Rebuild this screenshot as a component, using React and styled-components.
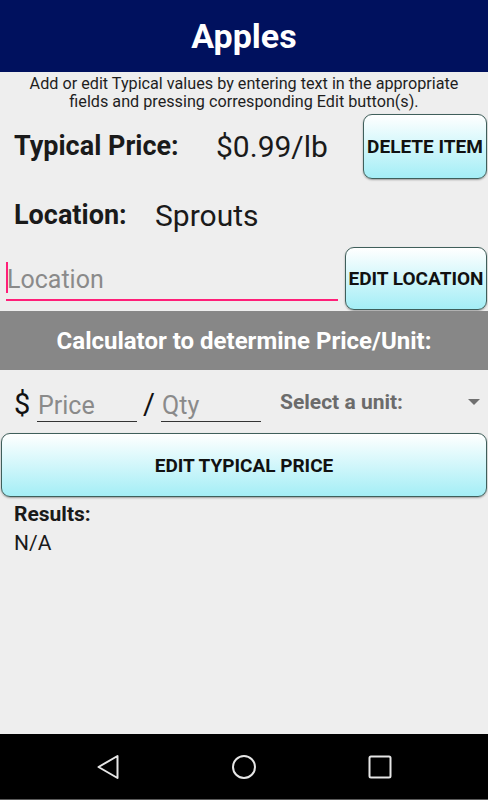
import styled, { createGlobalStyle } from "styled-components";

const GlobalStyle = createGlobalStyle`
  html, body {
    margin: 0;
    padding: 0;
    background: #eeeeee;
    font-family: Roboto, "Liberation Sans", sans-serif;
    color: #1a1a1a;
  }
  * { box-sizing: border-box; }
`;

const Screen = styled.div`
  width: 488px;
  height: 800px;
  display: flex;
  flex-direction: column;
  background: #eeeeee;
`;

const Header = styled.header`
  height: 72px;
  background: #00115e;
  display: flex;
  align-items: center;
  justify-content: center;
`;

const Title = styled.h1`
  margin: 0;
  color: #fff;
  font-size: 34px;
  font-weight: 700;
`;

const Intro = styled.p`
  margin: 3px 0 0;
  padding: 0 24px;
  text-align: center;
  font-size: 16.2px;
  line-height: 18px;
  color: #1e1e1e;
`;

const InfoRow = styled.div`
  display: flex;
  align-items: center;
  height: ${(p) => p.$height}px;
  padding: ${(p) => p.$top || 0}px 0 0 14px;
`;

const Label = styled.span`
  font-weight: 700;
  font-size: 27px;
  width: ${(p) => p.$width}px;
  color: #1a1a1a;
`;

const Value = styled.span`
  font-size: 30px;
  color: #1a1a1a;
  flex: 1;
`;

const Button = styled.button`
  font-family: inherit;
  font-weight: 700;
  font-size: 19px;
  color: #111;
  border: 1px solid #3f5f5b;
  border-radius: 9px;
  background: linear-gradient(to bottom, #ffffff 0%, #a4eef6 100%);
  box-shadow: 0 1px 2px rgba(0, 0, 0, 0.35);
  padding: 0;
  width: ${(p) => p.$width || "auto"};
  height: ${(p) => p.$height}px;
  white-space: nowrap;
`;

const EditRow = styled.div`
  display: flex;
  align-items: flex-start;
  padding: 0 1px 0 6px;
  margin-top: 4px;
  gap: 7px;
`;

const LocationField = styled.div`
  position: relative;
  flex: 1;
  height: 54px;
  border-bottom: 2px solid #ff1f78;
  display: flex;
  align-items: flex-end;
  padding-bottom: 5px;
`;

const Caret = styled.span`
  position: absolute;
  left: 0;
  top: 15px;
  width: 2px;
  height: 31px;
  background: #ff1f78;
`;

const FieldInput = styled.input`
  border: none;
  background: transparent;
  outline: none;
  font-family: inherit;
  font-size: 25px;
  color: #222;
  width: 100%;
  padding: 0 0 0 1px;
  &::placeholder {
    color: #8a8a8a;
  }
`;

const Banner = styled.div`
  margin-top: 1px;
  height: 59px;
  background: #878787;
  color: #fff;
  font-weight: 700;
  font-size: 24px;
  display: flex;
  align-items: center;
  justify-content: center;
`;

const CalcRow = styled.div`
  height: 63px;
  display: flex;
  align-items: center;
  padding: 0 8px 0 14px;
`;

const Symbol = styled.span`
  font-size: 29px;
  line-height: 1;
  color: #111;
  width: ${(p) => p.$width}px;
  text-align: ${(p) => p.$align || "left"};
  margin-top: 6px;
`;

const SmallField = styled.div`
  width: 100px;
  border-bottom: 1px solid #333;
  height: 32px;
  display: flex;
  align-items: center;
  margin-top: 8px;
`;

const UnitSelect = styled.div`
  flex: 1;
  margin-left: 19px;
  display: flex;
  align-items: center;
  justify-content: space-between;
  color: #6b6b6b;
  font-weight: 700;
  font-size: 21px;
`;

const Arrow = styled.span`
  width: 0;
  height: 0;
  border-left: 6px solid transparent;
  border-right: 6px solid transparent;
  border-top: 6px solid #707070;
`;

const WideWrap = styled.div`
  padding: 0 1px;
`;

const Results = styled.div`
  padding: 3px 14px 0;
  font-size: 21px;
  line-height: 29px;
  color: #1a1a1a;
`;

const ResultLabel = styled.div`
  font-weight: 700;
`;

const Spacer = styled.div`
  flex: 1;
`;

const NavBar = styled.nav`
  height: 66px;
  background: #000;
  border-bottom: 1px solid #5a5a5a;
  display: flex;
  align-items: center;
  justify-content: center;
  gap: 110px;
`;

const NavIcon = styled.svg`
  width: 26px;
  height: 26px;
  display: block;
`;

export default function App() {
  return (
    <>
      <GlobalStyle />
      <Screen>
        <Header>
          <Title>Apples</Title>
        </Header>
        <Intro>
          Add or edit Typical values by entering text in the appropriate
          fields and pressing corresponding Edit button(s).
        </Intro>
        <InfoRow $height={70}>
          <Label $width={202}>Typical Price:</Label>
          <Value>$0.99/lb</Value>
          <Button $width="124px" $height={65} style={{ marginRight: 1 }}>
            DELETE ITEM
          </Button>
        </InfoRow>
        <InfoRow $height={62} $top={6}>
          <Label $width={141}>Location:</Label>
          <Value>Sprouts</Value>
        </InfoRow>
        <EditRow>
          <LocationField>
            <Caret />
            <FieldInput placeholder="Location" />
          </LocationField>
          <Button $width="142px" $height={63}>
            EDIT LOCATION
          </Button>
        </EditRow>
        <Banner>Calculator to determine Price/Unit:</Banner>
        <CalcRow>
          <Symbol $width={23}>$</Symbol>
          <SmallField>
            <FieldInput placeholder="Price" />
          </SmallField>
          <Symbol $width={24} $align="center">/</Symbol>
          <SmallField>
            <FieldInput placeholder="Qty" />
          </SmallField>
          <UnitSelect>
            <span>Select a unit:</span>
            <Arrow />
          </UnitSelect>
        </CalcRow>
        <WideWrap>
          <Button $width="100%" $height={64}>
            EDIT TYPICAL PRICE
          </Button>
        </WideWrap>
        <Results>
          <ResultLabel>Results:</ResultLabel>
          <div>N/A</div>
        </Results>
        <Spacer />
        <NavBar>
          <NavIcon viewBox="0 0 26 26">
            <path
              d="M22.5 2 L22.5 24 L3.5 13 Z"
              fill="none"
              stroke="#e6e6e6"
              strokeWidth="2"
              strokeLinejoin="round"
            />
          </NavIcon>
          <NavIcon viewBox="0 0 26 26">
            <circle cx="13" cy="13" r="11" fill="none" stroke="#e6e6e6" strokeWidth="2" />
          </NavIcon>
          <NavIcon viewBox="0 0 26 26">
            <rect x="2.5" y="2.5" width="21" height="21" rx="1.5" fill="none" stroke="#e6e6e6" strokeWidth="2" />
          </NavIcon>
        </NavBar>
      </Screen>
    </>
  );
}
